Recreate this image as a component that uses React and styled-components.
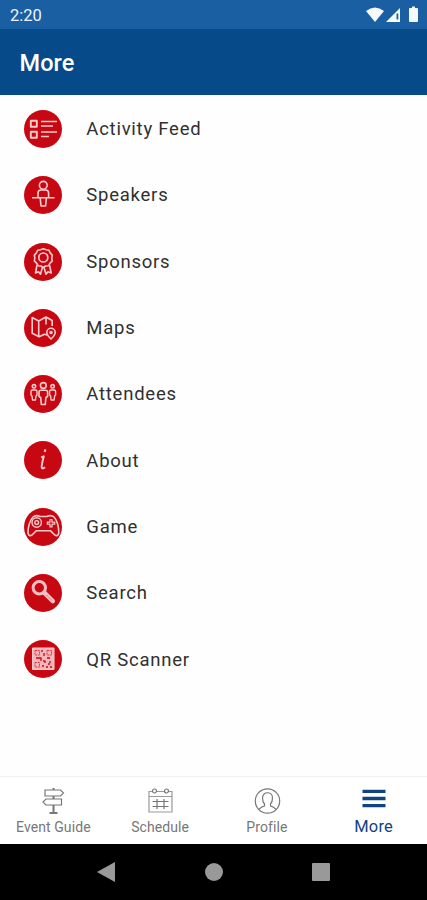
import React from "react";
import styled, { createGlobalStyle } from "styled-components";

const GlobalStyle = createGlobalStyle`
  * { box-sizing: border-box; }
  body { margin: 0; background: #fff; font-family: Roboto, sans-serif; }
`;

const Screen = styled.div`
  width: 427px;
  height: 900px;
  display: flex;
  flex-direction: column;
  background: #fefefe;
  overflow: hidden;
`;

const StatusBar = styled.div`
  height: 29px;
  flex: none;
  display: flex;
  align-items: center;
  justify-content: space-between;
  padding: 1px 7px 0 10px;
  background: #1b5fa3;
  color: #eaf3fc;
  font-size: 16.5px;
`;

const Header = styled.header`
  height: 66px;
  flex: none;
  display: flex;
  align-items: center;
  padding: 2px 19.5px 0;
  background: #064a8a;
`;

const Title = styled.h1`
  margin: 0;
  color: #fff;
  font-size: 23.5px;
  font-weight: 500;
  letter-spacing: 0.1px;
`;

const List = styled.ul`
  flex: 1;
  margin: 0;
  padding: 0.8px 0 0;
  list-style: none;
`;

const Row = styled.li`
  height: 66.3px;
  display: flex;
  align-items: center;
  gap: 24.3px;
  padding-left: 24px;
`;

const Disc = styled.svg`
  width: 38px;
  height: 38px;
  flex: none;
  border-radius: 50%;
  background: #c70712;
  fill: none;
  stroke: #f9cdce;
  stroke-width: 1.6;
  stroke-linejoin: round;
`;

const Label = styled.span`
  padding-top: 0.4px;
  color: #303030;
  font-size: 18.5px;
  letter-spacing: 0.76px;
`;

const Tabs = styled.nav`
  height: 68px;
  flex: none;
  display: grid;
  grid-template-columns: repeat(4, 1fr);
  border-top: 1px solid #efefef;
  background: #fff;
`;

const Tab = styled.div`
  display: flex;
  flex-direction: column;
  align-items: center;
  padding-top: 10px;
  color: ${(p) => (p.$active ? "#104382" : "#777")};
  font-size: ${(p) => (p.$active ? 16.5 : 14)}px;
  line-height: ${(p) => (p.$active ? 23 : 25)}px;
  letter-spacing: ${(p) => (p.$active ? 0.2 : 0.08)}px;
`;

const TabIcon = styled.svg`
  width: 28px;
  height: 28px;
  fill: none;
  stroke: currentColor;
  stroke-width: 1.2;
`;

const SystemNav = styled.div`
  height: 56px;
  flex: none;
  display: flex;
  align-items: center;
  justify-content: center;
  background: #000;
`;

const icons = {
  feed: (
    <>
      <path d="M6.800 10.700h6v6h-6zM6.800 21.700h6v6h-6z" strokeWidth="1.900" />
      <path d="M17 11.500h16M17 16h12M17 22h16M17 26.500h8" />
    </>
  ),
  speaker: (
    <>
      <circle cx="19.300" cy="9.300" r="3.900" />
      <path d="M14 21v-4q0-3 3-3h4.600q3 0 3 3v4M8 21.700h22.500M16.200 22l.8 8h4.600l.8-8" />
    </>
  ),
  sponsor: (
    <>
      <path d="M19.300 5.700l2.800 1 2.900.5 1.200 2.700 2 2.200-.4 3 .4 3-2.200 2-1.400 2.600-2.900.3-2.400 1.400-2.400-1.400-2.900-.3-1.400-2.600-2.200-2 .4-3-.4-3 2-2.200 1.200-2.700 2.900-.5z" />
      <circle cx="19.300" cy="14.500" r="4.500" />
      <path d="M13 22l-1.500 8 3-1.300 2 2.500 2-7M25.500 22l1.700 8-3.200-1.300-2 2.500-2-7" />
    </>
  ),
  map: (
    <>
      <path d="M23 26l-2.500-.8-5.500 2.500-6.800-3.500V8.500l6.500 3.500 7.300-4 6.200 3.500V17M14.700 12v15.500M22 8.500v7" />
      <path d="M27 30q-4.200-4-4.200-6.500a4.200 4.200 0 0 1 8.400 0q0 2.500-4.200 6.500z" />
      <circle cx="27" cy="23.500" r="1" />
    </>
  ),
  people: (
    <>
      <circle cx="19.300" cy="10.500" r="2.900" />
      <path d="M15 21.500v-4.300q0-2 2-2h4.600q2 0 2 2v4.300l-1.700 1-.6 7h-4l-.6-7z" />
      <circle cx="10" cy="11.300" r="1.700" />
      <circle cx="28.600" cy="11.300" r="1.700" />
      <path
        d="M7 20v-3.500q0-1.500 1.500-1.500h3q1.500 0 1.500 1.500V20l-1 1-.5 4h-3L8 21zM25.600 20v-3.500q0-1.500 1.500-1.500h3q1.500 0 1.500 1.500V20l-1 1-.5 4h-3l-.5-4z"
        strokeWidth="1.400"
      />
    </>
  ),
  about: (
    <>
      <path d="M21.200 8.300l-.4 2.700" strokeWidth="2.100" />
      <path d="M17 16.300l2.800-1-1.500 6-.7 4.500q0 3 3.500.5" strokeWidth="1.900" />
    </>
  ),
  game: (
    <>
      <path d="M9 9q3-2.500 7-.5h7q4-2 7 .5c3 3 5 10 4.800 16q-1 4-4 2l-4.500-4.300H12.500L8 27q-3 2-4-2C3.800 19 6 12 9 9z" />
      <circle cx="12.700" cy="14.500" r="4.700" strokeWidth="1.400" />
      <circle cx="12.700" cy="14.500" r="1.900" strokeWidth="1.400" />
      <path d="M26 11.500v2.700h-2.700v2H26v2.700h2v-2.700h2.700v-2H28v-2.700z" strokeWidth="1.200" />
    </>
  ),
  search: (
    <>
      <circle cx="15.300" cy="13.700" r="6.200" strokeWidth="3" stroke="#f5bfc1" />
      <path d="M20.300 18.700l8.500 8.500" strokeWidth="4.500" strokeLinecap="round" stroke="#f5bfc1" />
      <path d="M22.500 21l5.500 5.500" stroke="#dc6a70" strokeWidth="1" strokeDasharray="1.500 1" />
    </>
  ),
  qr: (
    <>
      <path d="M8.500 8h21.500v21.500H8.500z" fill="#f4b6b9" strokeWidth="1" />
      <g stroke="#c70712" strokeWidth="1.300">
        <path d="M11 10.500h4.500V15H11zM23 10.500h4.500V15H23zM11 22.500h4.500V27H11z" strokeWidth=".7" strokeDasharray="2 .8" />
        <path d="M18 10v2M20 13v3M12 18h5v3M23 18h3M19 21h2v2M26 21v2M22 27h2M26 27h2M18 26h2M24 24h2" />
      </g>
    </>
  ),
};

const items = [
  ["feed", "Activity Feed"],
  ["speaker", "Speakers"],
  ["sponsor", "Sponsors"],
  ["map", "Maps"],
  ["people", "Attendees"],
  ["about", "About"],
  ["game", "Game"],
  ["search", "Search"],
  ["qr", "QR Scanner"],
];

const tabs = [
  [
    "Event Guide",
    <>
      <path d="M14.500 1v2M14.500 9v3M14.500 18v8M10.500 26h8" strokeWidth="2" />
      <path d="M6 3h15.500l3 3-3 3H6zM22.500 12H7l-3 3 3 3h15.500z" />
    </>,
  ],
  [
    "Schedule",
    <>
      <path d="M6 4.500H3V25h23V4.500h-3M11 4.500h7M3 9.500h23" stroke="#999" />
      <circle cx="8.500" cy="4" r="2" />
      <circle cx="20.500" cy="4" r="2" />
      <path d="M6.500 14.500h16M6.500 19.500h16M11 12v10M18 12v10" />
    </>,
  ],
  [
    "Profile",
    <>
      <circle cx="14.500" cy="14" r="12.200" />
      <path d="M6 22.500q1-2 5.500-3.500v-2q-2-2-2-6c0-7 10-7 10 0q0 4-2 6v2q4.500 1.500 5.500 3.500" />
    </>,
  ],
  [
    "More",
    <path d="M2.500 4.300h23M2.500 11.500h23M2.500 18.700h23" strokeWidth="3.300" />,
  ],
];

export default function App() {
  return (
    <>
      <GlobalStyle />
      <Screen>
        <StatusBar>
          <span>2:20</span>
          <svg width="54" height="18" viewBox="0 0 54 18" fill="#f5faff">
            <path d="M0 5q9-7 18 0l-9 11z" />
            <path d="M34 2v14H20z" />
            <path d="M30.500 7.500h1.800v6h-1.800z" fill="#1b5fa3" />
            <path d="M44 2h2V.5h3V2h2q1 0 1 1v12q0 1-1 1h-7q-1 0-1-1V3q0-1 1-1z" />
          </svg>
        </StatusBar>
        <Header>
          <Title>More</Title>
        </Header>
        <List>
          {items.map(([icon, label]) => (
            <Row key={icon}>
              <Disc viewBox="0 0 38 38">{icons[icon]}</Disc>
              <Label>{label}</Label>
            </Row>
          ))}
        </List>
        <Tabs>
          {tabs.map(([label, drawing]) => (
            <Tab key={label} $active={label === "More"}>
              <TabIcon viewBox="0 0 28 28">{drawing}</TabIcon>
              <span>{label}</span>
            </Tab>
          ))}
        </Tabs>
        <SystemNav>
          <svg width="234" height="20" viewBox="0 0 234 20" fill="#999">
            <path d="M0 10L18 0v20z" />
            <circle cx="117" cy="10" r="9" />
            <rect x="215" y="1" width="18" height="18" rx="1" />
          </svg>
        </SystemNav>
      </Screen>
    </>
  );
}
